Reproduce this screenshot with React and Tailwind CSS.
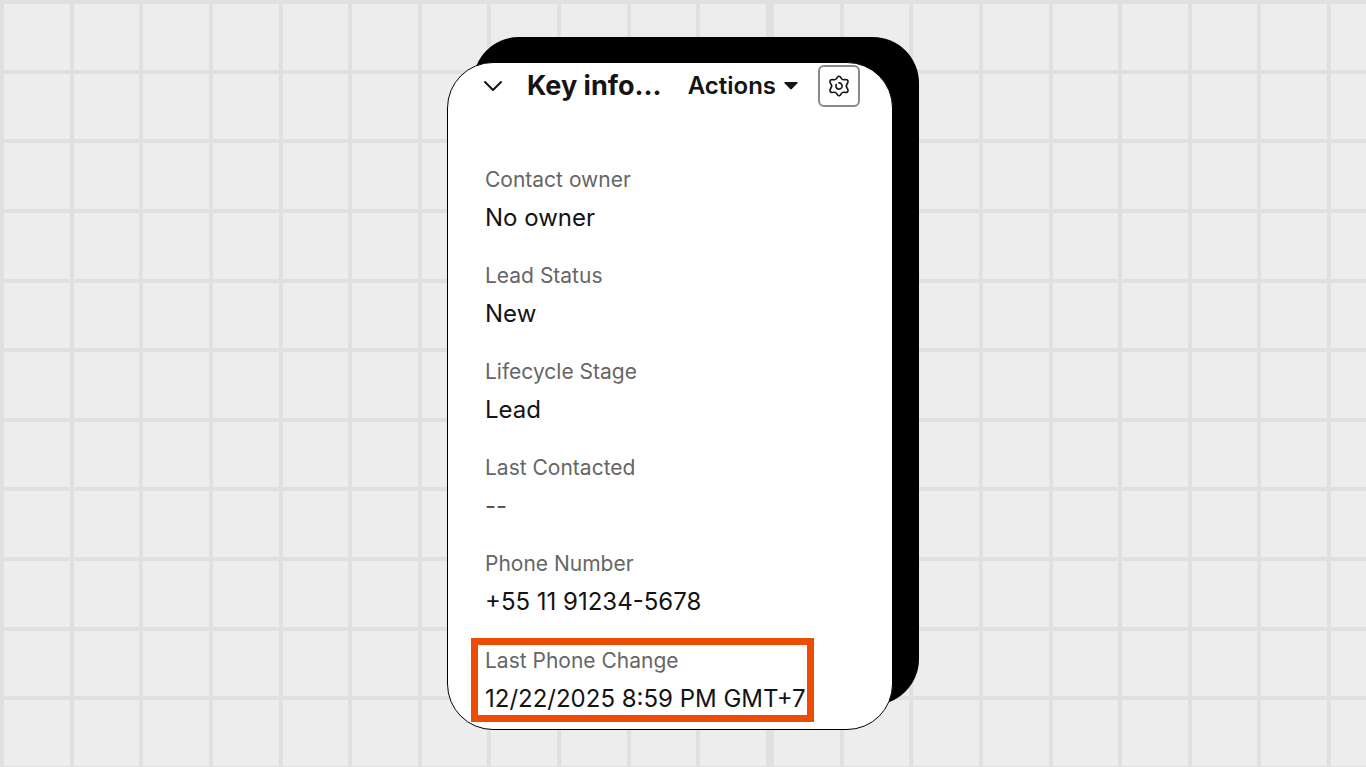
import clsx from 'clsx';

const fields = [
    { label: 'Contact owner', value: 'No owner' },
    { label: 'Lead Status', value: 'New' },
    { label: 'Lifecycle Stage', value: 'Lead' },
    { label: 'Last Contacted', value: '--', muted: true },
    { label: 'Phone Number', value: '+55 11 91234-5678' },
    { label: 'Last Phone Change', value: '12/22/2025 8:59 PM GMT+7', highlighted: true },
];

const cells = Array.from({ length: 121 });

const GridTile = () => (
    <div className="grid aspect-square w-[770px] shrink-0 grid-cols-11 grid-rows-11 border-t-4 border-l-4 border-[#e0e0e0]">
        {cells.map((_, idx) => (
            <div key={idx} className="border-r-4 border-b-4 border-[#e0e0e0]" />
        ))}
    </div>
);

const GearIcon = () => (
    <svg width="22" height="22" viewBox="0 0 22 22" fill="none" stroke="currentColor" strokeWidth="1.6" strokeLinejoin="round" strokeLinecap="round" aria-hidden="true">
        <path d="M9.4 2.2Q11 .3 12.6 2.2L13.3 3.4Q14.2 4.9 15.9 4.7L17.6 4.5Q20.2 4.6 20 7Q19.9 7.6 19.3 8.5Q17.3 11 19.3 13.5Q19.9 14.4 20 15Q20.2 17.4 17.6 17.5L15.9 17.3Q14.2 17.1 13.3 18.6L12.6 19.8Q11 21.7 9.4 19.8L8.7 18.6Q7.8 17.1 6.1 17.3L4.4 17.5Q1.8 17.4 2 15Q2.1 14.4 2.7 13.5Q4.7 11 2.7 8.5Q2.1 7.6 2 7Q1.8 4.6 4.4 4.5L6.1 4.7Q7.8 4.9 8.7 3.4Z" />
        <path d="M11 7.900A3.100 3.100 0 1 1 8.300 9.500" />
    </svg>
);

const Field = ({ label, value, muted, highlighted }) => (
    <div
        className={clsx(
            'flex flex-col gap-2',
            highlighted && '-mt-[7px] -ml-3.5 w-[343px] border-[7px] border-[#ed4c05] py-px pl-[7px]'
        )}
    >
        <dt className="text-[21px] leading-[30px] text-[#666]">{label}</dt>
        <dd className={clsx('text-2xl leading-[30px] whitespace-nowrap', muted ? 'text-[#555]' : 'text-[#141414]')}>
            {value}
        </dd>
    </div>
);

const App = () => {
    return (
        <main className="relative flex min-h-screen items-center justify-center overflow-hidden bg-[#ededed] font-['Inter',sans-serif]">
            <div className="absolute inset-0 flex items-start overflow-hidden" aria-hidden="true">
                <GridTile />
                <GridTile />
                <GridTile />
            </div>

            <div className="relative pt-[25px] pr-[26px]">
                <section className="w-[446px] rounded-[46px] border border-black bg-white pb-[7px] pl-[37px] shadow-[26px_-25px_0_#000]">
                    <header className="flex h-[46px] items-center pr-8 text-[#141414]">
                        <button type="button" aria-label="Collapse" className="-ml-1.5 shrink-0 p-1">
                            <svg width="20" height="20" viewBox="0 0 20 20" fill="none" stroke="currentColor" strokeWidth="2" strokeLinecap="round" strokeLinejoin="round" aria-hidden="true">
                                <path d="M2 6l8 8 8-8" />
                            </svg>
                        </button>
                        <h2 className="ml-5 text-[27px] leading-8 font-bold whitespace-nowrap">Key info...</h2>
                        <button type="button" className="ml-auto flex items-center gap-2 text-2xl leading-8 font-semibold">
                            Actions
                            <svg width="14" height="8" viewBox="0 0 14 8" fill="currentColor" aria-hidden="true">
                                <path d="M1 0h12q1 .5.4 1.300L7.800 7q-.8.8-1.600 0L.6 1.300Q0 .5 1 0Z" />
                            </svg>
                        </button>
                        <button type="button" aria-label="Settings" className="ml-5 flex size-[42px] shrink-0 items-center justify-center rounded-md border-2 border-[#8a8a8a]">
                            <GearIcon />
                        </button>
                    </header>

                    <dl className="mt-14 flex flex-col gap-7">
                        {fields.map((field) => (
                            <Field key={field.label} {...field} />
                        ))}
                    </dl>
                </section>
            </div>
        </main>
    );
};

export default App;
